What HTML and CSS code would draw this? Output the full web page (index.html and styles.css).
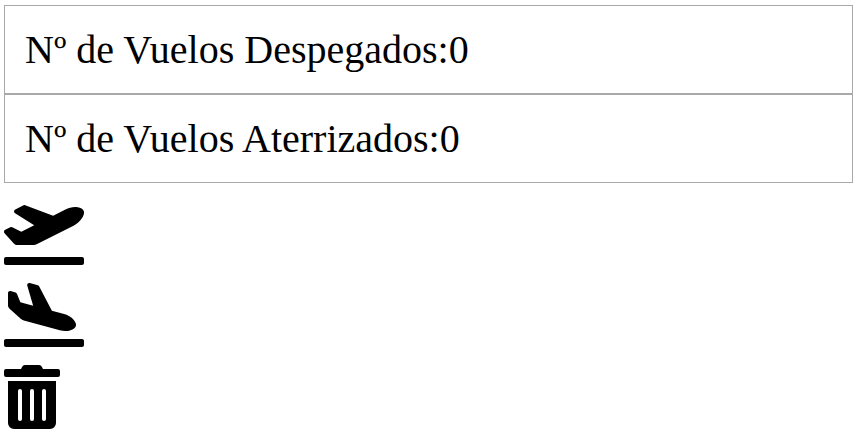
FILE: index.html
```html
<!DOCTYPE html>
<html lang="es">
<head>
<meta charset="utf-8">
<title>Vuelos</title>
<link rel="stylesheet" href="styles.css">
</head>
<body>
<div class="counter">Nº de Vuelos Despegados:0</div>
<div class="counter">Nº de Vuelos Aterrizados:0</div>
<div class="icons">
<svg class="icon" viewBox="0 0 640 512" width="80" height="64"><path d="M624 448H16c-8.84 0-16 7.16-16 16v32c0 8.84 7.16 16 16 16h608c8.84 0 16-7.16 16-16v-32c0-8.84-7.16-16-16-16zM80.55 341.27c6.28 6.84 15.1 10.72 24.33 10.71l130.54-.18a65.62 65.62 0 0 0 29.64-7.12l290.96-147.65c26.74-13.57 50.71-32.94 67.02-58.31 18.31-28.48 20.3-49.09 13.07-63.65-7.21-14.57-24.74-25.27-58.25-27.45-29.85-1.94-59.54 5.92-86.28 19.48l-98.51 49.99-218.7-82.06a17.799 17.799 0 0 0-18-1.11L90.62 67.29c-10.67 5.41-13.25 19.65-5.17 28.53l156.22 98.1-103.21 52.38-72.35-36.47a17.804 17.804 0 0 0-16.07.02L9.91 230.22c-10.44 5.3-13.19 19.12-5.57 28.08l76.21 82.97z"/></svg>
<svg class="icon" viewBox="0 0 640 512" width="80" height="64"><path d="M624 448H16c-8.84 0-16 7.16-16 16v32c0 8.84 7.16 16 16 16h608c8.84 0 16-7.16 16-16v-32c0-8.84-7.16-16-16-16zM44.81 205.66l88.74 80a62.607 62.607 0 0 0 25.47 13.93l287.6 78.35c26.48 7.21 54.56 8.72 81 1.36 29.67-8.27 43.44-21.21 47.25-35.71 3.83-14.5-1.73-32.71-23.37-54.96-19.28-19.82-44.35-32.79-70.83-40l-97.51-26.56L282.8 30.22c-1.51-5.81-5.95-10.35-11.66-11.91L206.05.58c-10.56-2.88-20.9 5.32-20.71 16.44l47.92 164.21-102.2-27.84-27.59-67.88c-1.93-4.89-6.01-8.57-11.02-9.93L52.72 64.75c-10.34-2.82-20.53 5-20.72 15.88l.23 101.78c.19 8.91 6.03 17.34 12.58 23.25z"/></svg>
<svg class="icon" viewBox="0 0 448 512" width="56" height="64"><path d="M32 464a48 48 0 0 0 48 48h288a48 48 0 0 0 48-48V128H32zm272-256a16 16 0 0 1 32 0v224a16 16 0 0 1-32 0zm-96 0a16 16 0 0 1 32 0v224a16 16 0 0 1-32 0zm-96 0a16 16 0 0 1 32 0v224a16 16 0 0 1-32 0zM432 32H312l-9.4-18.7A24 24 0 0 0 281.1 0H166.8a23.72 23.72 0 0 0-21.4 13.3L136 32H16A16 16 0 0 0 0 48v32a16 16 0 0 0 16 16h416a16 16 0 0 0 16-16V48a16 16 0 0 0-16-16z"/></svg>
</div>
</body>
</html>
```
FILE: styles.css
```css
body {
  margin: 5px 3px 0 4px;
  background: #fff;
  color: #000;
  font-family: "Liberation Serif", "Times New Roman", serif;
}

.counter {
  padding: 20px;
  border: 1px solid darkgray;
  font-size: 40px;
  line-height: 47px;
}

.icons {
  display: flex;
  flex-direction: column;
  align-items: flex-start;
  gap: 18px;
  padding-top: 18px;
}

.icon {
  display: block;
  fill: currentColor;
}
```
